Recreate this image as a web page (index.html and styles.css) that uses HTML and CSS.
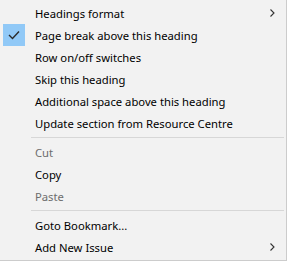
FILE: index.html
```html
<!DOCTYPE html>
<html>
<head>
<meta charset="utf-8">
<link rel="stylesheet" href="styles.css">
</head>
<body>
<div class="menu">
  <div class="item"><span class="gutter"></span><span class="label">Headings format</span><svg class="arrow" width="5" height="8" viewBox="0 0 5 8"><path d="M0.5 0.5 L4 4 L0.5 7.5" fill="none" stroke="#333" stroke-width="1.1"/></svg></div>
  <div class="item"><span class="gutter"><span class="check"><svg width="12" height="10" viewBox="0 0 12 10"><path d="M1 5 L4.5 8.5 L11 1.5" fill="none" stroke="#2b2b2b" stroke-width="1.4"/></svg></span></span><span class="label">Page break above this heading</span></div>
  <div class="item"><span class="gutter"></span><span class="label">Row on/off switches</span></div>
  <div class="item"><span class="gutter"></span><span class="label">Skip this heading</span></div>
  <div class="item"><span class="gutter"></span><span class="label">Additional space above this heading</span></div>
  <div class="item"><span class="gutter"></span><span class="label">Update section from Resource Centre</span></div>
  <div class="sep"></div>
  <div class="item disabled"><span class="gutter"></span><span class="label">Cut</span></div>
  <div class="item"><span class="gutter"></span><span class="label">Copy</span></div>
  <div class="item disabled"><span class="gutter"></span><span class="label">Paste</span></div>
  <div class="sep"></div>
  <div class="item"><span class="gutter"></span><span class="label">Goto Bookmark...</span></div>
  <div class="item"><span class="gutter"></span><span class="label">Add New Issue</span><svg class="arrow" width="5" height="8" viewBox="0 0 5 8"><path d="M0.5 0.5 L4 4 L0.5 7.5" fill="none" stroke="#333" stroke-width="1.1"/></svg></div>
</div>
</body>
</html>
```
FILE: styles.css
```css
html, body {
  margin: 0;
  padding: 0;
  background: #f2f2f2;
}
.menu {
  width: 287px;
  height: 261px;
  box-sizing: border-box;
  background: #f2f2f2;
  border-right: 1px solid #cccccc;
  border-bottom: 1px solid #cccccc;
  padding: 2px 0 2px 0;
  font-family: "Noto Sans", "Open Sans", sans-serif;
  font-size: 11.25px;
  color: #000;
}
.item {
  display: flex;
  align-items: center;
  height: 22px;
}
.gutter {
  width: 35px;
  flex: none;
  display: flex;
  align-items: center;
}
.check {
  margin-left: 3px;
  width: 22px;
  height: 22px;
  background: #91c9f7;
  display: flex;
  align-items: center;
  justify-content: center;
}
.label {
  flex: 1;
  white-space: nowrap;
}
.disabled .label {
  color: #6d6d6d;
}
.arrow {
  margin-right: 11px;
  flex: none;
}
.sep {
  height: 7px;
  display: flex;
  align-items: center;
  padding-left: 31px;
  padding-right: 2px;
}
.sep::before {
  content: "";
  flex: 1;
  height: 1px;
  background: #d7d7d7;
}
```
